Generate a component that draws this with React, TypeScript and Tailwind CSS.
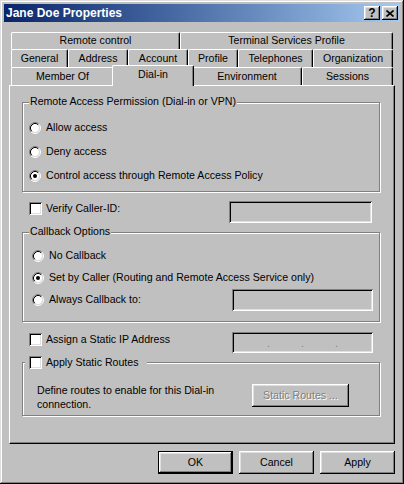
import React from "react";

const raised =
  "shadow-[inset_-1px_-1px_#000,inset_1px_1px_#fff,inset_-2px_-2px_#808080,inset_2px_2px_#dfdfdf]";
const sunken =
  "shadow-[inset_1px_1px_#808080,inset_-1px_-1px_#fff,inset_2px_2px_#000,inset_-2px_-2px_#dfdfdf]";

function Radio({ checked }: { checked?: boolean }) {
  return (
    <svg width="12" height="12" viewBox="0 0 12 12" className="shrink-0">
      <circle cx="6" cy="6" r="4.2" fill="#fff" />
      <path d="M2.11 9.89A5.5 5.5 0 0 1 9.89 2.11" stroke="#808080" fill="none" />
      <path d="M9.89 2.11A5.5 5.5 0 0 1 2.11 9.89" stroke="#fff" fill="none" />
      <path d="M2.82 9.18A4.5 4.5 0 0 1 9.18 2.82" stroke="#000" fill="none" />
      <path d="M9.18 2.82A4.5 4.5 0 0 1 2.82 9.18" stroke="#dfdfdf" fill="none" />
      {checked && <circle cx="6" cy="6" r="2" fill="#000" />}
    </svg>
  );
}

function Check() {
  return <div className={"w-[13px] h-[13px] shrink-0 bg-white " + sunken} />;
}

function Tab({
  label,
  className,
  selected,
}: {
  label: string;
  className: string;
  selected?: boolean;
}) {
  return (
    <div
      className={
        "flex items-center justify-center bg-[#c0c0c0] border-l border-t border-r border-l-white border-t-white border-r-black rounded-tl-[2px] rounded-tr-[2px] shadow-[inset_-1px_0_#808080] whitespace-nowrap " +
        (selected ? "relative z-10 " : "") +
        className
      }
    >
      {label}
    </div>
  );
}

function Button({
  label,
  isDefault,
  disabled,
  className,
}: {
  label: string;
  isDefault?: boolean;
  disabled?: boolean;
  className: string;
}) {
  return (
    <div
      className={
        "flex items-center justify-center bg-[#c0c0c0] " +
        (isDefault
          ? "border border-black shadow-[inset_-1px_-1px_#000,inset_1px_1px_#fff,inset_-2px_-2px_#808080,inset_2px_2px_#dfdfdf] "
          : raised + " ") +
        (disabled ? "text-[#808080] [text-shadow:1px_1px_0_#fff] " : "") +
        className
      }
    >
      {label}
    </div>
  );
}

function GroupLabel({ children }: { children: React.ReactNode }) {
  return (
    <span className="absolute -top-[8px] left-[6px] px-[1px] bg-[#c0c0c0] leading-[13px] whitespace-nowrap">
      {children}
    </span>
  );
}

const groupCls =
  "relative ml-[12px] w-[358px] border border-[#808080] shadow-[inset_1px_1px_#fff,1px_1px_#fff]";

export default function App() {
  return (
    <div className="w-[404px] h-[484px] bg-[#c0c0c0] p-[4px] flex flex-col font-['Liberation_Sans',Arial,sans-serif] text-[10.6px] text-black shadow-[inset_-1px_-1px_#000,inset_1px_1px_#dfdfdf,inset_-2px_-2px_#808080,inset_2px_2px_#fff]">
      {/* Title bar */}
      <div className="h-[18px] flex items-center bg-linear-to-r from-[#0a246a] to-[#a6caf0] pl-[2px] pr-[2px]">
        <span className="text-white font-bold text-[12px] leading-[18px]">
          Jane Doe Properties
        </span>
        <div className="ml-auto flex gap-[2px]">
          <div
            className={
              "w-[16px] h-[14px] bg-[#c0c0c0] flex items-center justify-center font-bold text-[12px] leading-[12px] " +
              raised
            }
          >
            ?
          </div>
          <div
            className={
              "w-[16px] h-[14px] bg-[#c0c0c0] flex items-center justify-center " +
              raised
            }
          >
            <svg width="8" height="7" viewBox="0 0 8 7">
              <path d="M0.5 0.5L7.5 6.5M7.5 0.5L0.5 6.5" stroke="#000" strokeWidth="1.6" />
            </svg>
          </div>
        </div>
      </div>

      <div className="px-[5px] flex flex-col">
        {/* Tab rows */}
        <div className="mt-[10px] ml-[2px] h-[17px] flex">
          <Tab label="Remote control" className="w-[169px] h-[17px]" />
          <Tab label="Terminal Services Profile" className="w-[213px] h-[17px]" />
        </div>
        <div className="ml-[2px] h-[18px] flex">
          <Tab label="General" className="w-[57px] h-[18px]" />
          <Tab label="Address" className="w-[60px] h-[18px]" />
          <Tab label="Account" className="w-[60px] h-[18px]" />
          <Tab label="Profile" className="w-[50px] h-[18px]" />
          <Tab label="Telephones" className="w-[75px] h-[18px]" />
          <Tab label="Organization" className="w-[80px] h-[18px]" />
        </div>
        <div className="ml-[2px] h-[18px] flex items-end">
          <Tab label="Member Of" className="w-[103px] h-[18px]" />
          <Tab
            label="Dial-in"
            selected
            className="w-[82px] h-[21px] -mx-[2px] -mb-[1px] pb-[3px]"
          />
          <Tab label="Environment" className="w-[110px] h-[18px]" />
          <Tab label="Sessions" className="w-[91px] h-[18px]" />
        </div>

        {/* Tab page */}
        <div className="h-[359px] flex flex-col border border-t-white border-l-white border-r-black border-b-black shadow-[inset_-1px_-1px_#808080]">
          {/* Remote Access Permission */}
          <div className={groupCls + " mt-[16px] h-[90px]"}>
            <GroupLabel>Remote Access Permission (Dial-in or VPN)</GroupLabel>
            <div className="flex flex-col pt-[18px] pl-[6px] gap-[10px]">
              <div className="h-[14px] flex items-center gap-[5px]">
                <Radio />
                <span>Allow access</span>
              </div>
              <div className="h-[14px] flex items-center gap-[5px]">
                <Radio />
                <span>Deny access</span>
              </div>
              <div className="h-[14px] flex items-center gap-[5px]">
                <Radio checked />
                <span>Control access through Remote Access Policy</span>
              </div>
            </div>
          </div>

          {/* Verify Caller-ID */}
          <div className="ml-[12px] w-[358px] mt-[9px] flex items-start">
            <div className="pl-[7px] mt-[1px] h-[13px] flex items-center gap-[4px]">
              <Check />
              <span>Verify Caller-ID:</span>
            </div>
            <div className={"ml-auto mr-[8px] w-[143px] h-[22px] bg-[#c0c0c0] " + sunken} />
          </div>

          {/* Callback Options */}
          <div className={groupCls + " mt-[9px] h-[90px]"}>
            <GroupLabel>Callback Options</GroupLabel>
            <div className="flex flex-col pt-[12px]">
              <div className="h-[22px] pl-[9px] flex items-center gap-[5px]">
                <Radio />
                <span>No Callback</span>
              </div>
              <div className="h-[22px] pl-[9px] flex items-center gap-[5px]">
                <Radio checked />
                <span>Set by Caller (Routing and Remote Access Service only)</span>
              </div>
              <div className="h-[22px] pl-[9px] flex items-center gap-[5px]">
                <Radio />
                <span>Always Callback to:</span>
                <div className={"ml-auto mr-[6px] w-[141px] h-[22px] bg-[#c0c0c0] " + sunken} />
              </div>
            </div>
          </div>

          {/* Static IP */}
          <div className="ml-[12px] w-[358px] mt-[10px] flex items-start">
            <div className="pl-[7px] mt-[1px] h-[13px] flex items-center gap-[4px]">
              <Check />
              <span>Assign a Static IP Address</span>
            </div>
            <div
              className={
                "ml-auto mr-[7px] w-[141px] h-[21px] bg-[#c0c0c0] flex items-center pl-[35px] gap-[31px] text-[#808080] leading-[10px] " +
                sunken
              }
            >
              <span>.</span>
              <span>.</span>
              <span>.</span>
            </div>
          </div>

          {/* Static Routes */}
          <div className={groupCls + " mt-[9px] h-[54px]"}>
            <div className="absolute -top-[7px] left-[2px] pl-[4px] w-[122px] h-[13px] flex items-center gap-[4px] bg-[#c0c0c0]">
              <Check />
              <span className="whitespace-nowrap">Apply Static Routes</span>
            </div>
            <div className="flex items-start pt-[20px] pl-[14px]">
              <div className="w-[215px] leading-[14px]">
                Define routes to enable for this Dial-in
                <br />
                connection.
              </div>
              <Button
                label="Static Routes ..."
                disabled
                className="mt-[1px] w-[97px] h-[23px]"
              />
            </div>
          </div>
        </div>

        {/* Dialog buttons */}
        <div className="mt-[7px] flex justify-end gap-[6px]">
          <Button label="OK" isDefault className="w-[75px] h-[23px]" />
          <Button label="Cancel" className="w-[75px] h-[23px]" />
          <Button label="Apply" className="w-[75px] h-[23px]" />
        </div>
      </div>
    </div>
  );
}
